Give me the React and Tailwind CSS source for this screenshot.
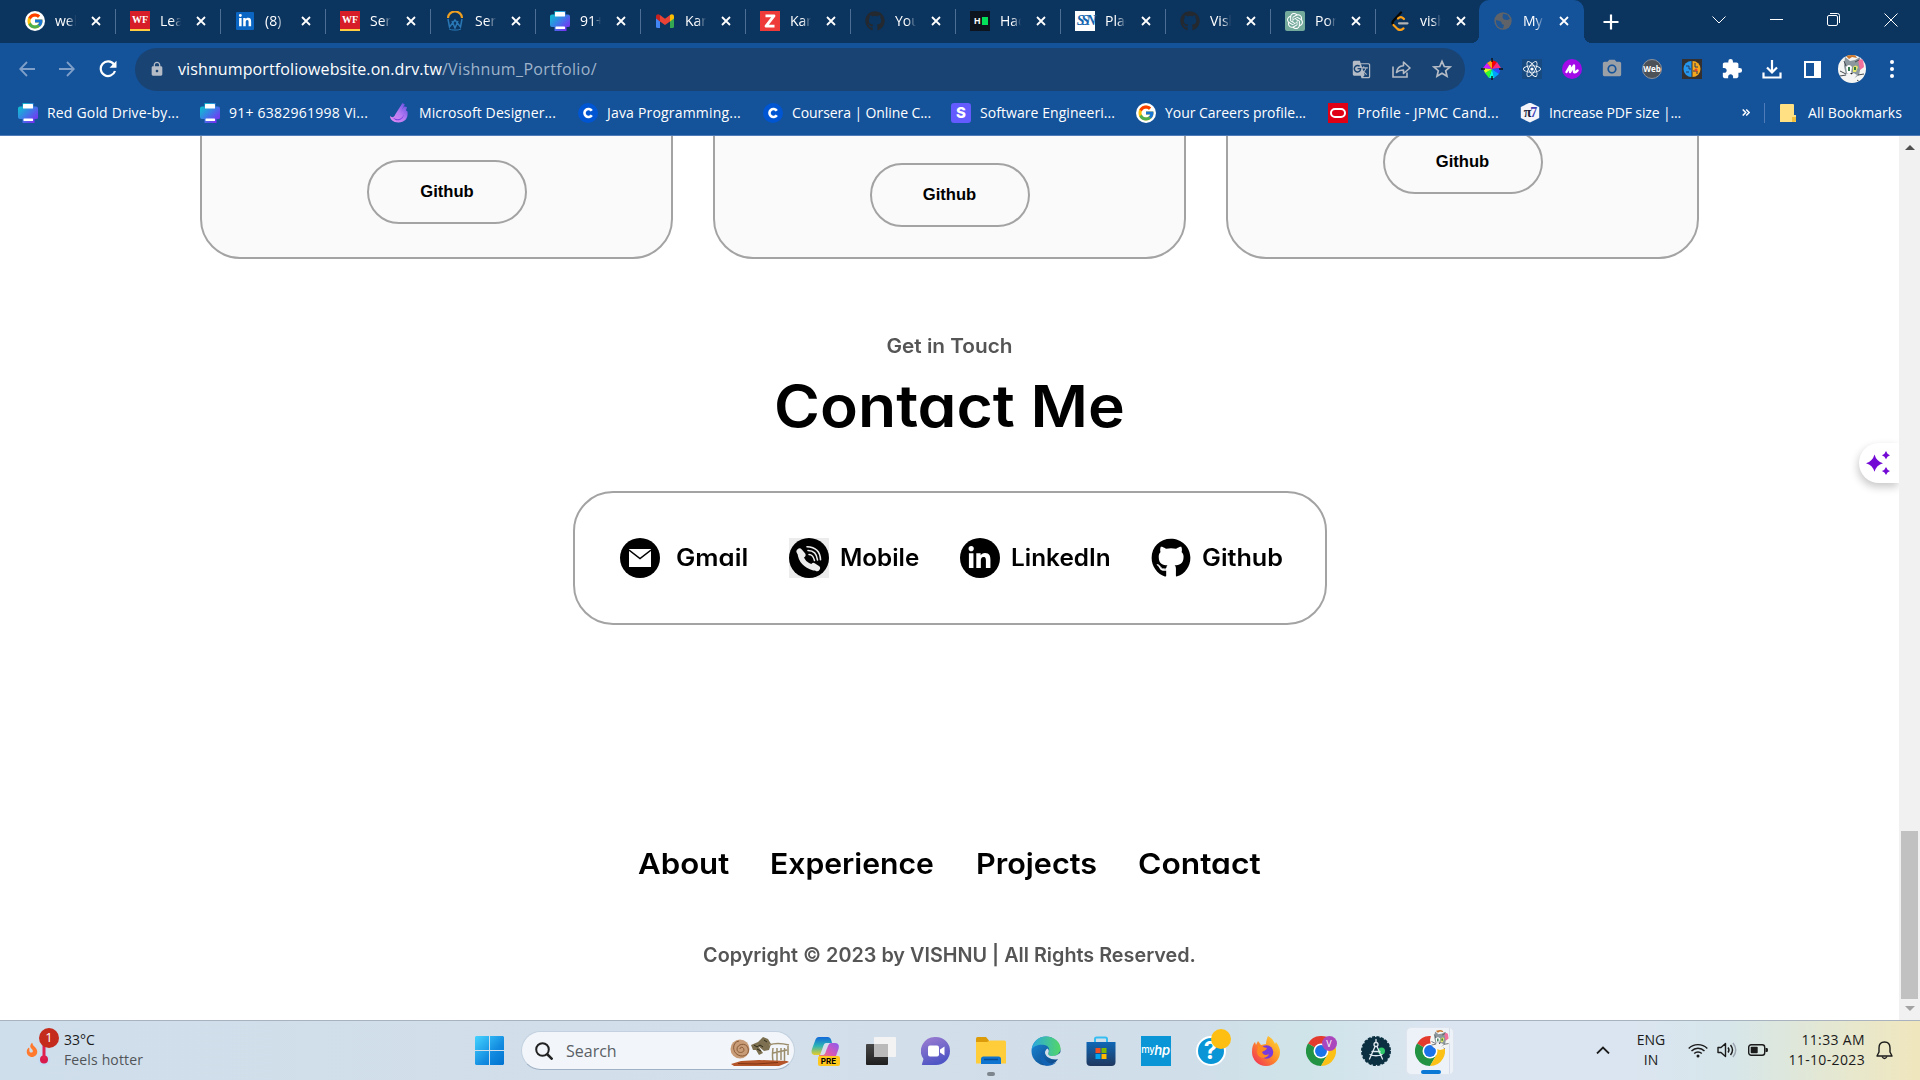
import { FcGoogle } from 'react-icons/fc';
import { FaGithub, FaLinkedinIn, FaReact, FaFire } from 'react-icons/fa';
import { MdExtension, MdLock, MdGTranslate, MdPhotoCamera } from 'react-icons/md';
import { SiOpenai } from 'react-icons/si';

/* ---------- small brand marks ---------- */

const GoogleMark = () => (
  <span className="flex size-5 items-center justify-center rounded-full bg-white">
    <FcGoogle className="size-[18px]" />
  </span>
);

const WellsFargo = () => (
  <span className="flex h-5 w-5 items-center justify-center border-b-2 border-[#ffcd41] bg-[#d71e28] font-['Liberation_Serif',serif] text-[10px] font-bold leading-none text-white">
    WF
  </span>
);

const LinkedInMark = () => (
  <span className="flex size-[18px] items-center justify-center rounded-[1px] bg-[#0a66c2]">
    <FaLinkedinIn className="size-3.5 text-white" />
  </span>
);

const Webinar = () => (
  <svg viewBox="0 0 20 20" className="size-5" fill="none">
    <path d="M3 7a7 6.500 0 0 1 14 0" stroke="#f0a020" strokeWidth="2.200" />
    <path d="M3 8l1.500 8L10 9l5.500 7L17 8M7 10l3 7 3-7" stroke="#2a78b5" strokeWidth="1.500" />
    <path d="M4 18c3 1.500 9 1.500 12 0" stroke="#2a78b5" />
  </svg>
);

const Printer = () => (
  <svg viewBox="0 0 20 20" className="size-5">
    <defs>
      <linearGradient id="printer" x1="0" y1="0" x2="1" y2="1">
        <stop offset="0" stopColor="#00d5c8" />
        <stop offset=".5" stopColor="#3b7ce8" />
        <stop offset="1" stopColor="#8a1cf5" />
      </linearGradient>
    </defs>
    <path d="M4.500 0h11v3.500H18q2 0 2 2v9q0 1.500-2 1.500h-1.500v4h-12v-4H2q-2 0-2-2V5.500q0-2 2-2h2.500z" fill="url(#printer)" />
    <rect x="5" y="1" width="10" height="4.500" rx=".6" fill="#fff" />
    <rect x="5.500" y="15.500" width="9.500" height="2.500" rx=".6" fill="#fff" />
  </svg>
);

const Gmail = () => (
  <svg viewBox="0 0 18 14" className="h-3.5 w-[18px]">
    <path d="M0 2.500V12.500Q0 14 1.500 14H4V6z" fill="#4285f4" />
    <path d="M18 2.500V12.500Q18 14 16.500 14H14V6z" fill="#34a853" />
    <path d="M14 1v6.500l4-3V2.500C18 0 15.500-.5 14 1z" fill="#fbbc04" />
    <path d="M4 7.500V1l5 3.800L14 1v6.500L9 11z" fill="#ea4335" />
    <path d="M0 2.500v2l4 3V1C2.500-.5 0 0 0 2.500z" fill="#c5221f" />
  </svg>
);

const Zed = () => (
  <span className="flex size-5 items-center justify-center bg-[#ee3a38]">
    <svg viewBox="0 0 12 14" className="h-3.5 w-3" fill="none">
      <path d="M1.500 1.800h8.500L2 12.200h8.500" stroke="#fff" strokeWidth="2.800" strokeLinejoin="round" />
    </svg>
  </span>
);

const Octocat = () => <FaGithub className="size-5 text-[#24292f]" />;

const HackerRank = () => (
  <span className="flex size-5 items-center gap-px bg-[#0d141e] pl-1">
    <b className="font-['Liberation_Sans',sans-serif] text-[9px] leading-none text-white">H</b>
    <i className="h-2 w-1.5 bg-[#05e05a]" />
  </span>
);

const Ssn = () => (
  <span className="flex size-5 items-center justify-center bg-white font-['Liberation_Serif',serif] text-[14px] font-bold italic leading-none tracking-[-3px] text-[#1666b0]">
    SSN
  </span>
);

const ChatGpt = () => (
  <span className="flex size-5 items-center justify-center rounded-[2px] bg-[#74aa9c]">
    <SiOpenai className="size-4 text-white" />
  </span>
);

const LeetCode = () => (
  <svg viewBox="0 0 18 20" className="h-5 w-[18px]" fill="none" strokeWidth="2.200" strokeLinecap="round">
    <path d="M10 1.500L2.500 9.500c-1.300 1.300-1.300 3 0 4.500" stroke="#070706" />
    <path d="M13 8C11 5.500 9 5.500 7 7.500" stroke="#ffa116" />
    <path d="M2.500 14l4 4c2 1.500 4 1.200 6-.6" stroke="#ffa116" />
    <path d="M8 12.300h8.500" stroke="#b3b3b3" />
  </svg>
);

const Globe = () => (
  <svg viewBox="0 0 18 18" className="size-[18px]">
    <circle cx="9" cy="9" r="8.700" fill="#5f6368" />
    <path d="M2 8l5 1.500 1 2.500 2 1-1 3.500C5 16.500 1.500 13 2 8zM9 1.800l4.500 1L16 7l-2.500 1L10 7.500 8.500 5.500z" fill="#14529a" opacity=".85" />
  </svg>
);

const Designer = () => (
  <svg viewBox="0 0 20 20" className="size-5">
    <defs>
      <linearGradient id="designer" x1="1" y1="0" x2="0" y2="1">
        <stop offset="0" stopColor="#5c4be0" />
        <stop offset=".5" stopColor="#b57bf3" />
        <stop offset="1" stopColor="#e68bf0" />
      </linearGradient>
    </defs>
    <path d="M12.500 0l2.300 1.500L11 8l3-4.500 3 .5-1 3.500 1.500 1c1 7-3 11-9 11-5.500 0-8.500-3-8.500-6.500 2 2 4 1.500 5.500-2z" fill="url(#designer)" />
    <path d="M3 14.500c4 3 9 2 11-3-1 6-8 8-11 3z" fill="#7a3fe0" />
  </svg>
);

const CourseraMark = () => (
  <span className="flex size-5 items-center justify-center rounded-full bg-[#0056d2]">
    <svg viewBox="0 0 12 12" className="size-3" fill="none">
      <path d="M9.800 3.800A4 4 0 1 0 9.800 8.200" stroke="#fff" strokeWidth="2.600" />
    </svg>
  </span>
);

const StackMark = () => (
  <span className="flex size-5 items-center justify-center rounded-[3px] bg-[#635bff] font-['Inter',sans-serif] text-[15px] font-extrabold leading-none text-white">
    S
  </span>
);

const Oracle = () => (
  <span className="flex size-5 items-center justify-center bg-[#e00016]">
    <i className="h-2.5 w-4 rounded-full border-[2.500px] border-white" />
  </span>
);

const PiSeven = () => (
  <span className="flex size-5 items-center justify-center bg-[#f3f5fa] font-['Liberation_Serif',serif] text-[14px] font-bold leading-none tracking-[-1px] text-[#20243c] [clip-path:polygon(50%_0,96%_22%,96%_78%,50%_100%,4%_78%,4%_22%)]">
    π<span className="text-[#3a3fb8]">7</span>
  </span>
);

const ChromeLogo = ({ className }) => (
  <svg viewBox="0 0 48 48" className={className}>
    <path d="M24 24L3.200 12A24 24 0 0 1 44.800 12z" fill="#e33b2e" />
    <path d="M3.200 12A24 24 0 0 0 24 48L34.400 30 24 24z" fill="#229342" />
    <path d="M24 48A24 24 0 0 0 44.800 12H24l10.400 18z" fill="#fbc116" />
    <path d="M24 12h20.800L40 9H20z" fill="#e33b2e" />
    <circle cx="24" cy="24" r="12" fill="#fff" />
    <circle cx="24" cy="24" r="9.500" fill="#1a73e8" />
  </svg>
);

const CatAvatar = ({ className }) => (
  <svg viewBox="0 0 28 28" className={className}>
    <defs>
      <clipPath id="avatar"><circle cx="14" cy="14" r="14" /></clipPath>
    </defs>
    <g clipPath="url(#avatar)">
      <rect width="28" height="28" fill="#f5f5f3" />
      <path d="M7 2l5 4 5-1 5-3 1 9-2 9-6 4-7-4-2-9z" fill="#8c989e" />
      <path d="M7 0l4 4 3-2 5 1-2-3z" fill="#c9772e" />
      <path d="M20 5l5-1 1 8-4 3z" fill="#f2709c" />
      <path d="M8 12q3-4 6 0l-1 6-4 0z" fill="#fff" />
      <path d="M15 12q3-3 5 0l-2 5-3 0z" fill="#e5e66c" />
      <path d="M11 12v4M17 12v3" stroke="#1d6b3a" strokeWidth="1.800" />
      <path d="M8 19q6-3 11 1l-4 5-5-1z" fill="#f4f4f4" />
      <path d="M12 18h3l-1.500 1.600z" fill="#222" />
      <path d="M2 16l6 3M2 21l6-1M26 19l-6 1M19 25l4 3M6 6l2 5M17 7l4-2" stroke="#454b50" />
    </g>
  </svg>
);

/* ---------- browser window ---------- */

const X = ({ className = 'size-2.5' }) => (
  <svg viewBox="0 0 10 10" className={className}>
    <path d="M1 1l8 8M9 1L1 9" stroke="#fff" strokeWidth="1.800" />
  </svg>
);

const TABS = [
  ['web', GoogleMark], ['Lear', WellsFargo], ['(8)', LinkedInMark], ['Serv', WellsFargo], ['Serv', Webinar],
  ['91+', Printer], ['Kart', Gmail], ['Kart', Zed], ['You', Octocat], ['Hack', HackerRank], ['Plac', Ssn],
  ['Vish', Octocat], ['Port', ChatGpt], ['vish', LeetCode], ['My P', Globe],
];

function Tab({ label, Icon, active, last }) {
  return (
    <div className={`relative flex h-[43px] w-[105px] shrink-0 items-center pb-px pl-[14px] ${active ? '-ml-[2px] rounded-t-[10px] bg-[#14529a]' : ''}`}>
      <span className="flex w-5 justify-center"><Icon /></span>
      <span className="ml-2.5 w-[22px] overflow-hidden whitespace-nowrap text-[14px] leading-5 text-white [mask-image:linear-gradient(to_right,#000_55%,transparent_96%)]">{label}</span>
      <span className="ml-3.5"><X /></span>
      {!active && !last && <i className="absolute right-0 top-[9px] h-[25px] w-px bg-[#4d6f96]" />}
      {active && (
        <>
          <i className="absolute -left-2 bottom-0 size-2 bg-[radial-gradient(circle_at_0_0,transparent_8px,#14529a_8px)]" />
          <i className="absolute -right-2 bottom-0 size-2 bg-[radial-gradient(circle_at_100%_0,transparent_8px,#14529a_8px)]" />
        </>
      )}
    </div>
  );
}

function TabStrip() {
  return (
    <div className="flex h-[43px] items-center bg-[#0b345f] pl-[11px]">
      {TABS.map(([label, Icon], i) => (
        <Tab key={i} label={label} Icon={Icon} active={i === 14} last={i === 13} />
      ))}
      <svg viewBox="0 0 16 16" className="ml-[19px] size-4"><path d="M8 .5v15M.5 8h15" stroke="#fff" strokeWidth="2.200" /></svg>
      <div className="mb-1 ml-auto flex w-[230px] items-center">
        <svg viewBox="0 0 14 8" className="ml-[22px] h-2 w-3.5" fill="none" stroke="#fff"><path d="M.5.500L7 7 13.500.5" /></svg>
        <i className="ml-[44px] h-px w-[13px] bg-white" />
        <svg viewBox="0 0 13 13" className="ml-[44px] size-[13px]" fill="none" stroke="#fff">
          <rect x=".5" y="2.500" width="10" height="10" rx="1.500" />
          <path d="M3 .5h7.500a2 2 0 0 1 2 2V10" />
        </svg>
        <svg viewBox="0 0 14 14" className="ml-[44px] size-3.5" stroke="#fff"><path d="M.5.500l13 13M13.500.5l-13 13" /></svg>
      </div>
    </div>
  );
}

function Extensions() {
  return (
    <div className="flex items-center">
      {[
        <svg viewBox="0 0 22 22" className="size-[22px]">
          <path d="M11 11V2l5 2z" fill="#f00" /><path d="M11 11l5-7 4 6z" fill="#ff2a7f" /><path d="M11 11l9-1-2 6z" fill="#2f4bff" /><path d="M11 11l7 5-5 4z" fill="#00a2ff" />
          <path d="M11 11l2 9-5 0z" fill="#00ffe1" /><path d="M11 11l-3 9-4-5z" fill="#2fff2f" /><path d="M11 11l-7 4-2-5z" fill="#e2ff1a" /><path d="M11 11L2 10l4-5z" fill="#d21cff" /><path d="M11 11L6 5l5-3z" fill="#ff9a1a" />
          <path d="M11 0v4M11 18v4M0 11h4M18 11h4" stroke="#111" strokeWidth="1.400" />
        </svg>,
        <span className="flex size-5 items-center justify-center bg-[#174a80]"><FaReact className="size-[18px] text-white" /></span>,
        <span className="flex size-5 items-center justify-center rounded-full bg-[#a10be8]">
          <svg viewBox="0 0 14 12" className="h-3 w-3.5" fill="none" stroke="#fff" strokeWidth="2.400" strokeLinecap="round" strokeLinejoin="round"><path d="M1.500 9L5 3v6l4-6.500V9q1.500 1 3.500-1.500" /></svg>
        </span>,
        <MdPhotoCamera className="size-[22px] text-[#9aa0a6]" />,
        <span className="flex size-5 items-center justify-center rounded-full border border-[#8d939a] bg-[#4d5259] text-[8px] font-bold leading-none text-white">Web</span>,
        <span className="flex size-5 items-center justify-center bg-[#33302f]">
          <svg viewBox="0 0 18 18" className="size-[18px]">
            <path d="M8.500 1A8 8 0 0 0 8.500 17z" fill="#2496ee" /><path d="M9.500 1A8 8 0 0 1 9.500 17z" fill="#f5a81c" />
            <path d="M3 6h3v3h2M3 12h3M12 3v4h3M10 11h4v3" stroke="#263a5c" fill="none" />
            <circle cx="13" cy="10" r="1.500" fill="#e5432e" />
          </svg>
        </span>,
        <MdExtension className="size-[22px] text-white" />,
        <svg viewBox="0 0 20 20" className="size-5" fill="none" stroke="#fff" strokeWidth="2.200"><path d="M10 1v12M5 8.500l5 5 5-5M1.500 13.500V18.500h17v-5" /></svg>,
        <i className="h-[17px] w-[17px] border-[2.500px] border-r-[7px] border-white" />,
        <CatAvatar className="size-7" />,
        <svg viewBox="0 0 4 18" className="h-[18px] w-1" fill="#fff"><circle cx="2" cy="2" r="2" /><circle cx="2" cy="9" r="2" /><circle cx="2" cy="16" r="2" /></svg>,
      ].map((icon, i) => <span key={i} className="flex w-10 justify-center">{icon}</span>)}
    </div>
  );
}

function Toolbar() {
  return (
    <div className="flex h-[53px] items-center pb-px">
      <svg viewBox="0 0 16 16" className="ml-[19px] size-4" fill="none" stroke="#7f9fc8" strokeWidth="1.800"><path d="M16 8H1.500M8 1L1.200 8 8 15" /></svg>
      <svg viewBox="0 0 16 16" className="ml-6 size-4" fill="none" stroke="#7f9fc8" strokeWidth="1.800"><path d="M0 8h14.500M8 1l6.800 7L8 15" /></svg>
      <svg viewBox="0 0 18 18" className="ml-6 size-[18px]" fill="none" stroke="#fff" strokeWidth="2.200"><path d="M15 4.500A7.300 7.300 0 1 0 16 11" /><path d="M17.500.8v7h-7z" fill="#fff" stroke="none" /></svg>
      <div className="ml-[18px] flex h-[43px] w-[1330px] items-center rounded-full bg-[#194373] text-[16px] text-white">
        <MdLock className="ml-[14px] size-4 text-[#b5bcc5]" />
        <span className="ml-[13px] tracking-[0.11px]">vishnumportfoliowebsite.on.drv.tw</span>
        <span className="tracking-[0.35px] text-[#9fb3cb]">/Vishnum_Portfolio/</span>
        <div className="ml-auto mr-[13px] flex items-center gap-[21px] text-[#b5bcc5]">
          <MdGTranslate className="size-[19px]" />
          <svg viewBox="0 0 19 18" className="h-[18px] w-[19px]" fill="none" stroke="currentColor" strokeWidth="1.600"><path d="M1 6.500V17h14v-4.500" /><path d="M4.500 12.500c.5-4.500 3-6.500 7-6.700V2l6.500 6-6.500 5.500V10c-3 0-5 .5-7 2.500z" strokeLinejoin="round" /></svg>
          <svg viewBox="0 0 20 20" className="size-5" fill="none" stroke="currentColor" strokeWidth="1.700"><path d="M10 2.300l2.300 5.200 5.700.5-4.300 3.700 1.300 5.600-5-3-5 3 1.300-5.600L2 8l5.700-.5z" /></svg>
        </div>
      </div>
      <div className="ml-[7px]"><Extensions /></div>
    </div>
  );
}

const BOOKMARKS = [
  ['Red Gold Drive-by...', Printer, 'w-[182px] tracking-[0.18px]'],
  ['91+ 6382961998 Vi...', Printer, 'w-[190px] tracking-[0.24px]'],
  ['Microsoft Designer...', Designer, 'w-[188px] tracking-[0.12px]'],
  ['Java Programming...', CourseraMark, 'w-[185px] tracking-[0.19px]'],
  ['Coursera | Online C...', CourseraMark, 'w-[188px] tracking-[-0.09px]'],
  ['Software Engineeri...', StackMark, 'w-[185px] tracking-[0.06px]'],
  ['Your Careers profile...', GoogleMark, 'w-[192px] tracking-[-0.03px]'],
  ['Profile - JPMC Cand...', Oracle, 'w-[192px] tracking-[0.27px]'],
  ['Increase PDF size |...', PiSeven, 'w-[182px] tracking-[-0.14px]'],
];

function BookmarksBar() {
  return (
    <div className="flex h-10 items-center border-b border-[#4f7cb8] pb-1.5 pl-[18px] pr-[18px] text-[14px] text-white">
      {BOOKMARKS.map(([label, Icon, cls]) => (
        <div key={label} className={`flex shrink-0 items-center gap-[9px] whitespace-nowrap ${cls}`}><Icon />{label}</div>
      ))}
      <svg viewBox="0 0 8 7" className="ml-auto h-[7px] w-2" fill="none" stroke="#fff" strokeWidth="1.500"><path d="M.7.500l3 3-3 3M4.200.5l3 3-3 3" /></svg>
      <i className="ml-[14px] h-5 w-px bg-[#4f7cb8]" />
      <svg viewBox="0 0 16 18" className="ml-[15px] h-[18px] w-4"><path d="M1 0h12a1 1 0 0 1 1 1v10h2v7H0V1a1 1 0 0 1 1-1z" fill="#ffe083" /><path d="M12 13h4v4l-1 1h-3z" fill="#f3c03c" /></svg>
      <span className="ml-[12px] tracking-[0.05px]">All Bookmarks</span>
    </div>
  );
}

/* ---------- portfolio page ---------- */

const CARDS = ['mb-[33px] ml-[21px]', 'mb-[30px]', 'mb-[63px]'];

function ProjectCards() {
  return (
    <div className="flex h-[123px] justify-center gap-10 overflow-hidden">
      {CARDS.map((offset) => (
        <div key={offset} className="-mt-[50px] flex h-[173px] w-[473px] items-end justify-center rounded-[40px] border-2 border-[#a3a3a3] bg-[#fafafa]">
          <div className={`flex h-16 w-40 items-center justify-center rounded-full border-2 border-[#a3a3a3] font-['Liberation_Sans',sans-serif] text-[16.6px] font-bold text-black ${offset}`}>Github</div>
        </div>
      ))}
    </div>
  );
}

const Disc = ({ children }) => <span className="flex size-10 items-center justify-center rounded-full bg-black text-white">{children}</span>;

function Contact() {
  return (
    <div className="mx-auto mt-[47px] flex h-[134px] w-[754px] items-center gap-10 rounded-[40px] border-2 border-[#a3a3a3] pl-[45px] text-[24px] font-semibold">
      <div className="flex items-center gap-4">
        <Disc>
          <svg viewBox="0 0 22 18" className="h-[18px] w-[22px]"><rect width="22" height="18" fill="#fff" /><path d="M0 1l11 8.500L22 1" fill="none" stroke="#000" strokeWidth="1.500" /></svg>
        </Disc>
        <span className="w-[73px] origin-left scale-x-[1.075]">Gmail</span>
      </div>
      <div className="flex items-center gap-[11px]">
        <span className="bg-[#ececec]">
          <Disc>
            <svg viewBox="0 0 40 40" className="size-10" fill="none" stroke="#ececec" strokeLinecap="round">
              <path d="M11 15q1 11 14 15" strokeWidth="5" />
              <path d="M10.500 13.500l3 3.500M24.500 28l3.500 2.200" strokeWidth="6" />
              <path d="M20 16.500q4 0 5.500 6" strokeWidth="1.500" />
              <path d="M19 12.500q8.500 0 9.500 9.500" strokeWidth="1.600" />
              <path d="M18 8.800q13 .5 13.500 13" strokeWidth="1.600" />
            </svg>
          </Disc>
        </span>
        <span className="w-20 origin-left scale-x-[1.01]">Mobile</span>
      </div>
      <div className="flex items-center gap-[11px]">
        <Disc><FaLinkedinIn className="size-[25px]" /></Disc>
        <span className="w-[100px] origin-left scale-x-[1.015]">LinkedIn</span>
      </div>
      <div className="flex items-center gap-[11px]">
        <FaGithub className="size-10" />
        <span className="origin-left scale-x-[1.05]">Github</span>
      </div>
    </div>
  );
}

function Page() {
  return (
    <main className="flex w-[1899px] flex-col bg-white font-['Inter','Open_Sans',sans-serif] text-black [font-feature-settings:'cv11']">
      <ProjectCards />
      <p className="mt-[72px] scale-x-[1.065] text-center text-[19.5px] font-semibold leading-[30px] text-[#555]">Get in Touch</p>
      <h1 className="mt-[7px] scale-x-[1.075] text-center text-[58px] font-semibold leading-[76px]">Contact Me</h1>
      <Contact />
      <nav className="mt-[217px] flex justify-center gap-10 text-[29px] font-semibold leading-[44px]">
        <span className="w-[92px] origin-left scale-x-[1.075]">About</span>
        <span className="w-[166px] origin-left scale-x-[1.04]">Experience</span>
        <span className="w-[122px] origin-left scale-x-[1.055]">Projects</span>
        <span className="w-[124px] origin-left scale-x-[1.095]">Contact</span>
      </nav>
      <p className="mt-[54px] scale-x-[1.015] text-center text-[19.5px] font-semibold leading-[30px] text-[#555]">Copyright © 2023 by VISHNU | All Rights Reserved.</p>
    </main>
  );
}

function Scrollbar() {
  return (
    <div className="flex w-[21px] flex-col items-center bg-[#f1f1f1]">
      <i className="mt-[9px] size-0 border-x-[5px] border-b-[5px] border-x-transparent border-b-[#505050]" />
      <i className="mt-auto h-[168px] w-[17px] bg-[#c1c1c1]" />
      <i className="mb-[9px] mt-[7px] size-0 border-x-[5px] border-t-[5px] border-x-transparent border-t-[#a3a3a3]" />
    </div>
  );
}

function SparkleButton() {
  return (
    <div className="absolute right-[21px] top-[307px] flex h-10 w-10 items-center rounded-l-full bg-white pl-[7px] shadow-[-1px_4px_8px_rgba(0,0,0,.22)] [clip-path:inset(-12px_0_-16px_-12px)]">
      <svg viewBox="0 0 24 24" className="size-6" fill="#7209d4">
        <path d="M8.500 3.500q1.800 6.700 8.500 8.700-6.700 1.900-8.500 8.600Q6.700 14.100 0 12.200q6.700-2 8.500-8.700zM20 0q1 3.300 4 4.200-3 1-4 4.100-1-3.100-4.100-4.100 3.100-1 4.100-4.200zM20 16q1 3 4 4-3 1-4 4-1-3-4.100-4 3.100-1 4.100-4z" />
      </svg>
    </div>
  );
}

/* ---------- taskbar ---------- */

function WindowsLogo() {
  return (
    <svg viewBox="0 0 29 29" className="size-[29px]">
      <defs><linearGradient id="win" x1="0" y1="0" x2="1" y2="1"><stop offset="0" stopColor="#45d3ff" /><stop offset=".6" stopColor="#128be0" /><stop offset="1" stopColor="#0072d0" /></linearGradient></defs>
      <path d="M1 0h13v14H0V1zM15 0h13l1 1v13H15zM0 15h14v14H1l-1-1zM15 15h14v13l-1 1H15z" fill="url(#win)" />
    </svg>
  );
}

const Fossils = () => (
  <svg viewBox="0 0 60 30" className="h-[30px] w-[60px]">
    <ellipse cx="10" cy="13" rx="9.500" ry="9.500" fill="#c99c78" />
    <path d="M10 13c0-3 4-2 4 1s-7 4-7-1 9-7 11-1-4 10-10 7-6-13 1-14" fill="none" stroke="#8a5b38" />
    <path d="M21 9l7-3 5-5 5 2 3 5-2 6-5 1-6-5 5 7-4 2-3-5-3 0z" fill="#7d7050" />
    <path d="M24 9l3 2 3-2 3 2M34 4l3 2M27 13l4 2" stroke="#2e291b" fill="none" />
    <path d="M39 9q8-3 20 0M43 12q-1 8 0 13M47 12v13M51 12v12M54.500 12v13M58 10v9M43 17l14-3" stroke="#9b8d6b" strokeWidth="1.500" fill="none" />
    <path d="M1 28l10-3 18-1 28 1 2 1-10 4H4z" fill="#b5562a" />
    <path d="M8 27.500l18 .5 22-1.500" stroke="#7f3514" fill="none" />
  </svg>
);

const Copilot = () => (
  <span className="relative block h-[30px] w-[30px]">
    <svg viewBox="0 0 28 24" className="h-6 w-7">
      <defs>
        <linearGradient id="cpa" x1="0" y1="0" x2="0" y2="1"><stop offset="0" stopColor="#1268d9" /><stop offset=".5" stopColor="#2db5b5" /><stop offset="1" stopColor="#e8cd2a" /></linearGradient>
        <linearGradient id="cpb" x1="1" y1="0" x2="0" y2="1"><stop offset="0" stopColor="#8a5cf0" /><stop offset=".5" stopColor="#d657b8" /><stop offset="1" stopColor="#ff8a4a" /></linearGradient>
      </defs>
      <path d="M8 1h9q3 0 4 6h-6q-2 0-3 4l-3 8H5q-6 0-4-6L4 5q1-4 4-4z" fill="url(#cpa)" />
      <path d="M20 7h4q5 0 3.500 6L25 20q-1 4-5 4h-9q-3 0-3-5h4q2 0 3-4l2-5q1-3 3-3z" fill="url(#cpb)" />
    </svg>
    <b className="absolute left-[7px] top-[20px] flex h-[10px] w-[22px] items-center justify-center rounded-[2px] bg-[#ffc81f] font-['Inter',sans-serif] text-[8px] leading-none text-black">PRE</b>
  </span>
);

const TaskView = () => (
  <svg viewBox="0 0 30 28" className="h-7 w-[30px]">
    <defs><linearGradient id="tv" x1="0" y1="0" x2="0" y2="1"><stop offset="0" stopColor="#474747" /><stop offset="1" stopColor="#1f1f1f" /></linearGradient></defs>
    <rect y="7" width="22" height="21" rx="1" fill="url(#tv)" />
    <rect x="8" y="0" width="22" height="20" rx="1" fill="#f3f3f3" />
    <path d="M8 7h14v13H8z" fill="#bababa" />
  </svg>
);

const Chat = () => (
  <svg viewBox="0 0 30 30" className="size-[30px]">
    <defs><linearGradient id="chat" x1="0" y1="0" x2=".4" y2="1"><stop offset="0" stopColor="#a07fd2" /><stop offset="1" stopColor="#4f55c4" /></linearGradient></defs>
    <path d="M15 1a14 14 0 0 1 0 28H1.500q-1 0-.5-1l1.500-5A14 14 0 0 1 15 1z" fill="url(#chat)" />
    <rect x="7" y="9.500" width="11" height="11" rx="2" fill="#fff" /><path d="M19 13.500l4.500-3v9L19 16.500z" fill="#fff" />
  </svg>
);

const Explorer = () => (
  <svg viewBox="0 0 30 28" className="h-7 w-[30px]">
    <path d="M0 1.500Q0 0 1.500 0H10l3 3.500v5H0z" fill="#dc9c0a" />
    <path d="M0 5h11l3-1.500h14.500q1.500 0 1.500 1.500v21.500H0z" fill="#ffcc3a" />
    <path d="M5 27v-5q0-2.500 2.500-2.500h15q2.500 0 2.500 2.500v5z" fill="#0f74cf" />
    <path d="M8 22.500h14" stroke="#0a4d94" strokeWidth="1.500" />
  </svg>
);

const Edge = () => (
  <svg viewBox="0 0 30 30" className="size-[30px]">
    <defs>
      <linearGradient id="edgeA" x1="0" y1="0" x2="1" y2="0"><stop offset="0" stopColor="#2aa7e0" /><stop offset="1" stopColor="#53d668" /></linearGradient>
      <linearGradient id="edgeB" x1="0" y1="0" x2="1" y2="1"><stop offset="0" stopColor="#1b8ddd" /><stop offset="1" stopColor="#0c3f7d" /></linearGradient>
    </defs>
    <circle cx="15" cy="15" r="14.500" fill="url(#edgeB)" />
    <path d="M.7 13.500C2 5 8 .5 15 .5c8.500 0 14.500 6 14.500 12 0 5-4 7.500-8 7.500-4 0-5-2-4-3.500 1.500-2 1-6.500-4-7.500C8 8 2.500 10 .7 13.500z" fill="url(#edgeA)" />
    <path d="M17.500 16.500c-1 1.500 0 3.500 4 3.500 3 0 6-1.200 8.500-4v6.500C22 25 15 22 14 17c0-2 1-3.500 2.500-4.500 1.500 1 1.500 3 1 4z" fill="#d3dfea" />
    <path d="M13.500 13C10 18 13 26 20 27.500c2 .3 4-.5 5.500-1.500-2 2.500-6 4-10 3.700C8 28 7 18 13.500 13z" fill="#1263b4" />
  </svg>
);

const Store = () => (
  <svg viewBox="0 0 30 30" className="size-[30px]">
    <defs><linearGradient id="store" x1="0" y1="0" x2="0" y2="1"><stop offset="0" stopColor="#0f67b6" /><stop offset="1" stopColor="#20385f" /></linearGradient></defs>
    <path d="M9 7V3q0-1.500 1.500-1.500h9Q21 1.500 21 3v4" fill="none" stroke="#38bdf2" strokeWidth="2" />
    <path d="M.5 6h29v20q0 4-4 4h-21q-4 0-4-4z" fill="url(#store)" />
    <path d="M9.500 12h5v5h-5z" fill="#f25022" /><path d="M15.500 12h5v5h-5z" fill="#7fba00" /><path d="M9.500 18h5v5h-5z" fill="#00a4ef" /><path d="M15.500 18h5v5h-5z" fill="#ffb900" />
  </svg>
);

const Firefox = () => (
  <svg viewBox="0 0 30 30" className="size-[30px]">
    <defs><linearGradient id="fox" x1="1" y1="0" x2="0" y2="1"><stop offset="0" stopColor="#ffe43a" /><stop offset=".45" stopColor="#ff9325" /><stop offset="1" stopColor="#f0245f" /></linearGradient></defs>
    <path d="M17 0c5 3 6 6 7 8l1-2c3 4 4 7 4 10a14 14 0 0 1-28 0c0-5 1-8 3-10l1 3 2-4 3 4 5-1c0-3 1-6 2-8z" fill="url(#fox)" />
    <circle cx="15.500" cy="16" r="6.800" fill="#7a3bdc" />
    <path d="M7 10c4-1 5 2 9 2-1 3-4 3-5 4 1 3 4 4 7 2-1 5-11 6-12-2z" fill="#ff8a1f" />
  </svg>
);

const AndroidStudio = () => (
  <svg viewBox="0 0 30 30" className="size-[30px]">
    <circle cx="15" cy="15" r="14" fill="#0b3041" stroke="#0b3041" strokeWidth="2" strokeDasharray="3 1.400" />
    <circle cx="20.500" cy="15" r="3.500" fill="#30c96b" />
    <path d="M15 3.500v3M14 10.500L8.500 23M16 10.500L21.500 23M9 18.500q6 2.500 12 0M11 15.500h8" stroke="#dfeaf0" strokeWidth="1.300" fill="none" strokeLinecap="round" />
    <circle cx="15" cy="8.500" r="2" fill="#0b3041" stroke="#dfeaf0" strokeWidth="1.300" />
  </svg>
);

const APPS = [
  <Copilot />,
  <TaskView />,
  <Chat />,
  <Explorer />,
  <Edge />,
  <Store />,
  <span className="flex size-[30px] items-center justify-center bg-[#0a96d6] font-['Inter',sans-serif] text-[9.5px] font-medium tracking-[-0.3px] text-white">my<i className="text-[13px] font-semibold">hp</i></span>,
  <span className="relative flex size-[30px] items-center justify-center rounded-full border-2 border-white bg-[#0a96d6] font-['Inter',sans-serif] text-[24px] font-bold leading-none text-white">
    ?<i className="absolute -top-[9px] left-[13px] size-5 rounded-full bg-[#ffbf12]" />
  </span>,
  <Firefox />,
  <span className="relative">
    <ChromeLogo className="size-[30px]" />
    <span className="absolute -right-px top-0 flex size-[15px] items-center justify-center rounded-full bg-[#ab47bc] text-[9px] leading-none text-white">V</span>
  </span>,
  <AndroidStudio />,
];

function Taskbar() {
  return (
    <footer className="flex h-[60px] items-center border-t border-[#a9b3bf] bg-[linear-gradient(90deg,#cfdeeb_0%,#d3dfea_40%,#d0dee9_62%,#cfe4e9_68%,#dbe5f1_75%,#dbe5f1_85%,#d6e6ea_90%,#e6e8cf_96%,#f0e6bd_100%)] text-[14px] text-[#1b1b1b]">
      <div className="flex w-[475px] items-center pl-[26px]">
        <div className="relative h-9 w-[34px]">
          <FaFire className="absolute left-0 top-2.5 h-3.5 w-3 text-[#ff7a2f]" />
          <svg viewBox="0 0 14 34" className="absolute left-[11px] top-0 h-[34px] w-3.5">
            <path d="M4 3q3-3 6 0v18q4 3 3 7-2 5-6 5t-6-5q-1-4 3-7z" fill="#c5dcf5" /><circle cx="7" cy="26.500" r="4" fill="#d81b4c" /><path d="M7 8v18" stroke="#e0214f" strokeWidth="3" />
          </svg>
          <span className="absolute -top-[5px] left-[13px] flex size-5 items-center justify-center rounded-full bg-[#c42b1c] text-[13px] leading-none text-white">1</span>
        </div>
        <div className="ml-1 pb-px leading-5">
          <div>33°C</div>
          <div className="tracking-[0.14px] text-[#505458]">Feels hotter</div>
        </div>
      </div>
      <WindowsLogo />
      <div className="ml-[17px] flex h-[39px] w-[274px] items-center rounded-full border border-[#c2d0df] border-b-[#9fb1c4] bg-[#f2f6fa] pr-1">
        <svg viewBox="0 0 18 18" className="ml-[13px] size-[18px]" fill="none" stroke="#222" strokeWidth="2"><circle cx="7.500" cy="7.500" r="6.300" /><path d="M12 12l5.500 5.500" strokeWidth="2.500" /></svg>
        <span className="ml-[13px] text-[16px] text-[#5a5f66]">Search</span>
        <span className="ml-auto"><Fossils /></span>
      </div>
      <div className="ml-[3px] flex">
        {APPS.map((icon, i) => (
          <div key={i} className="relative flex h-12 w-[55px] items-center justify-center">
            {icon}
            {i === 3 && <i className="absolute -bottom-px h-1 w-2 rounded-full bg-[#7d858d]" />}
          </div>
        ))}
      </div>
      <div className="relative ml-[3px] flex h-12 w-[48px] items-center justify-center rounded-[5px] border border-[#dfe5ee] bg-[#edf2f9]">
        <i className="absolute -right-px inset-y-0 w-[5px] rounded-r-[5px] border-l border-[#d4dde9]" />
        <ChromeLogo className="size-[30px]" />
        <CatAvatar className="absolute right-[3px] top-[2px] size-5" />
        <i className="absolute bottom-0 left-[14px] h-1 w-[20px] rounded-full bg-[#0a78d4]" />
      </div>
      <div className="ml-auto flex items-center pb-px">
        <svg viewBox="0 0 14 8" className="h-2 w-3.5" fill="none" stroke="#1b1b1b" strokeWidth="1.800"><path d="M1 7.500l6-6 6 6" /></svg>
        <div className="ml-[26px] w-[30px] text-center leading-5">ENG<br />IN</div>
        <svg viewBox="0 0 20 16" className="ml-[22px] h-4 w-5" fill="none" stroke="#1b1b1b" strokeWidth="1.400">
          <path d="M.7 6.500a13 13 0 0 1 18.600 0M3.500 9a9 9 0 0 1 13 0M6.200 11.600a5.400 5.400 0 0 1 7.600 0" /><circle cx="10" cy="14" r="1.500" fill="#1b1b1b" stroke="none" />
        </svg>
        <svg viewBox="0 0 20 16" className="ml-[9px] h-4 w-5" fill="none" stroke="#1b1b1b" strokeWidth="1.400">
          <path d="M1 5.500h3L8.500 1.500v13L4 10.500H1z" strokeLinejoin="round" /><path d="M11 5.500q2 2.500 0 5M13.500 3q4 5 0 10" /><path d="M16 1q5.500 7 0 14" stroke="#9aa5af" />
        </svg>
        <svg viewBox="0 0 20 12" className="ml-[11px] h-3 w-5"><rect x=".7" y=".7" width="16" height="10.600" rx="2.500" fill="none" stroke="#1b1b1b" strokeWidth="1.400" /><rect x="2.700" y="2.700" width="7" height="6.600" rx=".8" fill="#1b1b1b" /><path d="M17.500 4H19q1 0 1 2t-1 2h-1.500z" fill="#1b1b1b" /></svg>
        <div className="ml-[19px] w-[78px] whitespace-nowrap text-right leading-5 tracking-[0.35px]">11:33 AM<br />11-10-2023</div>
        <svg viewBox="0 0 17 19" className="ml-[11px] mr-[27px] h-[19px] w-[17px]" fill="none" stroke="#1b1b1b" strokeWidth="1.400" strokeLinejoin="round"><path d="M8.500 1Q14 1 14 7v4l2 4H1l2-4V7q0-6 5.500-6z" /><path d="M6 15.500q2.500 4 5 0" /></svg>
      </div>
    </footer>
  );
}

export default function App() {
  return (
    <div className="flex h-[1080px] w-[1920px] flex-col overflow-hidden font-['Open_Sans','Noto_Sans',sans-serif]">
      <header className="bg-[#14529a]">
        <TabStrip />
        <Toolbar />
        <BookmarksBar />
      </header>
      <div className="relative flex h-[884px] shrink-0 overflow-hidden bg-white">
        <Page />
        <Scrollbar />
        <SparkleButton />
      </div>
      <Taskbar />
    </div>
  );
}
